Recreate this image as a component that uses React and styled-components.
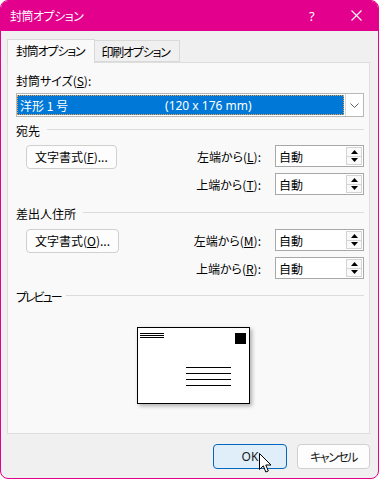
import React from 'react';
import styled, { createGlobalStyle } from 'styled-components';

const GlobalStyle = createGlobalStyle`
  html, body {
    margin: 0;
    padding: 0;
    background: #ffffff;
  }
  body {
    font-family: "Noto Sans CJK JP", "Noto Sans", sans-serif;
    font-size: 12px;
    font-feature-settings: "palt";
    color: #000000;
  }
`;

const EnvelopeDialog = () => {
  return (
    <Window>
      <GlobalStyle />
      <TitleBar>
        <Title>封筒オプション</Title>
        <HelpMark>?</HelpMark>
        <CloseMark>
          <svg width="11" height="11" viewBox="0 0 11 11">
            <path d="M0.5 0.5 L10.5 10.5 M10.5 0.5 L0.5 10.5" stroke="#ffffff" strokeWidth="1.1" fill="none" />
          </svg>
        </CloseMark>
      </TitleBar>
      <Content>
        <TabRow>
          <Tab active>封筒オプション</Tab>
          <Tab>印刷オプション</Tab>
        </TabRow>
        <Panel>
          <FieldLabel>封筒サイズ(<u>S</u>):</FieldLabel>
          <Combo>
            <ComboValue>
              <span>洋形 1 号</span>
              <ComboSize>(120 x 176 mm)</ComboSize>
            </ComboValue>
            <ComboButton>
              <svg width="9" height="5" viewBox="0 0 9 5">
                <path d="M0.5 0.5 L4.5 4.5 L8.5 0.5" stroke="#606060" strokeWidth="1" fill="none" />
              </svg>
            </ComboButton>
          </Combo>

          <GroupHeader top={5}>宛先</GroupHeader>
          <Group top={7}>
            <PushButton>文字書式(<u>F</u>)...</PushButton>
            <SpinColumn>
              <SpinRow>
                <SpinLabel>左端から(<u>L</u>):</SpinLabel>
                <Spin value="自動" />
              </SpinRow>
              <SpinRow>
                <SpinLabel>上端から(<u>T</u>):</SpinLabel>
                <Spin value="自動" />
              </SpinRow>
            </SpinColumn>
          </Group>

          <GroupHeader top={10}>差出人住所</GroupHeader>
          <Group top={8}>
            <PushButton>文字書式(<u>O</u>)...</PushButton>
            <SpinColumn>
              <SpinRow>
                <SpinLabel>左端から(<u>M</u>):</SpinLabel>
                <Spin value="自動" />
              </SpinRow>
              <SpinRow>
                <SpinLabel>上端から(<u>R</u>):</SpinLabel>
                <Spin value="自動" />
              </SpinRow>
            </SpinColumn>
          </Group>

          <GroupHeader top={9} tight>プレビュー</GroupHeader>
          <Envelope>
            <ReturnLines>
              <Rule />
              <Rule />
              <Rule />
            </ReturnLines>
            <Stamp />
            <AddressLines>
              <Rule />
              <Rule />
              <Rule />
              <Rule />
            </AddressLines>
          </Envelope>
        </Panel>
        <Footer>
          <DialogButton primary>
            OK
            <Cursor>
              <svg width="13" height="21" viewBox="0 0 13 21">
                <path
                  d="M0.5 0.5 L0.5 16.5 L4.3 12.8 L6.8 19 L9.3 18 L6.8 12 L12 12 Z"
                  fill="#ffffff"
                  stroke="#000000"
                  strokeWidth="1"
                  strokeLinejoin="round"
                />
              </svg>
            </Cursor>
          </DialogButton>
          <DialogButton tight>キャンセル</DialogButton>
        </Footer>
      </Content>
    </Window>
  );
};

const Spin = ({ value }) => (
  <SpinBox>
    <SpinValue>{value}</SpinValue>
    <SpinButtons>
      <SpinArrow>
        <svg width="7" height="4" viewBox="0 0 7 4"><path d="M0 4 L3.5 0 L7 4 Z" fill="#000000" /></svg>
      </SpinArrow>
      <SpinArrow>
        <svg width="7" height="4" viewBox="0 0 7 4"><path d="M0 0 L3.5 4 L7 0 Z" fill="#000000" /></svg>
      </SpinArrow>
    </SpinButtons>
  </SpinBox>
);

const Window = styled.div`
  width: 379px;
  height: 479px;
  box-sizing: border-box;
  border: 1px solid #e3008c;
  border-radius: 8px;
  background: #f0f0f0;
  overflow: hidden;
  display: flex;
  flex-direction: column;
`;

const TitleBar = styled.div`
  height: 30px;
  flex-shrink: 0;
  background: #e3008c;
  display: flex;
  align-items: center;
  padding-left: 9px;
  color: #ffffff;
`;

const Title = styled.span`
  font-size: 12px;
  letter-spacing: -0.5px;
  flex: 1;
  margin-top: -1px;
`;

const HelpMark = styled.span`
  font-family: "Noto Sans", sans-serif;
  font-size: 13px;
  width: 12px;
  margin-right: 30px;
  margin-top: -1px;
`;

const CloseMark = styled.span`
  display: flex;
  width: 11px;
  margin-right: 16px;
  margin-top: -1px;
`;

const Content = styled.div`
  flex: 1;
  display: flex;
  flex-direction: column;
  padding: 8px 8px 0 6px;
`;

const TabRow = styled.div`
  display: flex;
  align-items: flex-end;
  height: 23px;
`;

const Tab = styled.div`
  position: relative;
  z-index: ${({ active }) => (active ? 1 : 0)};
  box-sizing: border-box;
  height: ${({ active }) => (active ? '24px' : '22px')};
  margin-bottom: ${({ active }) => (active ? '-1px' : '0')};
  padding: 0 ${({ active }) => (active ? '10px 0 8px' : '9px 0 6px')};
  background: ${({ active }) => (active ? '#f9f9f9' : '#f0f0f0')};
  border: 1px solid #d9d9d9;
  border-bottom: ${({ active }) => (active ? 'none' : '1px solid #d9d9d9')};
  border-left: ${({ active }) => (active ? '1px solid #d9d9d9' : 'none')};
  display: flex;
  align-items: center;
  padding-bottom: ${({ active }) => (active ? '2px' : '0')};
  font-size: 12px;
  letter-spacing: -1.2px;
`;

const Panel = styled.div`
  box-sizing: border-box;
  height: 372px;
  border: 1px solid #dedede;
  background: #f9f9f9;
  padding: 0 5px 0 8px;
  display: flex;
  flex-direction: column;
`;

const FieldLabel = styled.div`
  margin-top: 10px;
  line-height: 16px;
  height: 16px;
`;

const Combo = styled.div`
  margin-top: 4px;
  height: 24px;
  box-sizing: border-box;
  border: 1px solid #b8b8b8;
  background: #ffffff;
  display: flex;
`;

const ComboValue = styled.div`
  flex: 1;
  margin: 1px 1px 1px 0;
  background: #0078d7;
  color: #ffffff;
  outline: 1px dotted #f0a040;
  outline-offset: -1px;
  display: flex;
  align-items: center;
  padding-left: 3px;
`;

const ComboSize = styled.span`
  margin-left: 97px;
  font-family: "Noto Sans", "Noto Sans CJK JP", sans-serif;
`;

const ComboButton = styled.div`
  width: 17px;
  border-left: 1px solid #d8d8d8;
  display: flex;
  align-items: center;
  justify-content: center;
`;

const GroupHeader = styled.div`
  margin-top: ${({ top }) => top}px;
  height: 16px;
  display: flex;
  align-items: center;
  gap: ${({ tight }) => (tight ? '5px' : '7px')};
  letter-spacing: ${({ tight }) => (tight ? '-2px' : '0')};

  &::after {
    content: '';
    flex: 1;
    height: 1px;
    background: #dcdcdc;
    margin-top: -1px;
  }
`;

const Group = styled.div`
  margin-top: ${({ top }) => top}px;
  display: flex;
  justify-content: space-between;
  align-items: flex-start;
`;

const PushButton = styled.div`
  margin-left: 10px;
  height: 24px;
  box-sizing: border-box;
  padding: 0 8px 0 8px;
  border: 1px solid #d0d0d0;
  border-radius: 4px;
  background: #fdfdfd;
  display: flex;
  align-items: center;
  padding-bottom: 1px;
`;

const SpinColumn = styled.div`
  display: flex;
  flex-direction: column;
  gap: 6px;
`;

const SpinRow = styled.div`
  display: flex;
  align-items: center;
  justify-content: flex-end;
  gap: 14px;
`;

const SpinLabel = styled.span`
  padding-top: 1px;
`;

const SpinBox = styled.div`
  width: 89px;
  height: 22px;
  box-sizing: border-box;
  border: 1px solid #a8a8a8;
  background: #ffffff;
  display: flex;
`;

const SpinValue = styled.div`
  flex: 1;
  display: flex;
  align-items: center;
  padding-left: 3px;
`;

const SpinButtons = styled.div`
  width: 16px;
  margin: 1px 1px 1px 0;
  display: flex;
  flex-direction: column;
`;

const SpinArrow = styled.div`
  flex: 1;
  box-sizing: border-box;
  border: 1px solid #d4d4d4;
  background: #fafafa;
  display: flex;
  align-items: center;
  justify-content: center;

  & + & {
    border-top: none;
  }
`;

const Envelope = styled.div`
  margin: 23px 0 0 121px;
  width: 113px;
  height: 77px;
  box-sizing: border-box;
  border: 1px solid #000000;
  background: #ffffff;
  box-shadow: 2px 2px 4px rgba(0, 0, 0, 0.3);
  display: grid;
  grid-template-columns: 46px 1fr 12px;
  grid-template-rows: auto 1fr;
  padding: 5px 2px 0 2px;
`;

const ReturnLines = styled.div`
  grid-column: 1;
  grid-row: 1;
  width: 24px;
  display: flex;
  flex-direction: column;
  gap: 1px;
`;

const Stamp = styled.div`
  grid-column: 3;
  grid-row: 1;
  width: 11px;
  height: 11px;
  background: #000000;
`;

const AddressLines = styled.div`
  grid-column: 2;
  grid-row: 2;
  width: 45px;
  margin-top: 23px;
  display: flex;
  flex-direction: column;
  gap: 5px;
`;

const Rule = styled.div`
  height: 1px;
  background: #000000;
`;

const Footer = styled.div`
  display: flex;
  justify-content: flex-end;
  gap: 10px;
  margin-top: 10px;
`;

const DialogButton = styled.div`
  position: relative;
  width: ${({ primary }) => (primary ? '74px' : '73px')};
  height: 25px;
  box-sizing: border-box;
  border: 1px solid ${({ primary }) => (primary ? '#0067c0' : '#d0d0d0')};
  border-radius: 4px;
  background: ${({ primary }) => (primary ? '#e0eef9' : '#fdfdfd')};
  display: flex;
  align-items: center;
  justify-content: center;
  font-family: "Noto Sans", "Noto Sans CJK JP", sans-serif;
  font-size: 12px;
  letter-spacing: ${({ tight }) => (tight ? '-1.5px' : '0')};
  color: #1a1a1a;
`;

const Cursor = styled.span`
  position: absolute;
  left: 45px;
  top: 8px;
  display: flex;
`;

export default EnvelopeDialog;
